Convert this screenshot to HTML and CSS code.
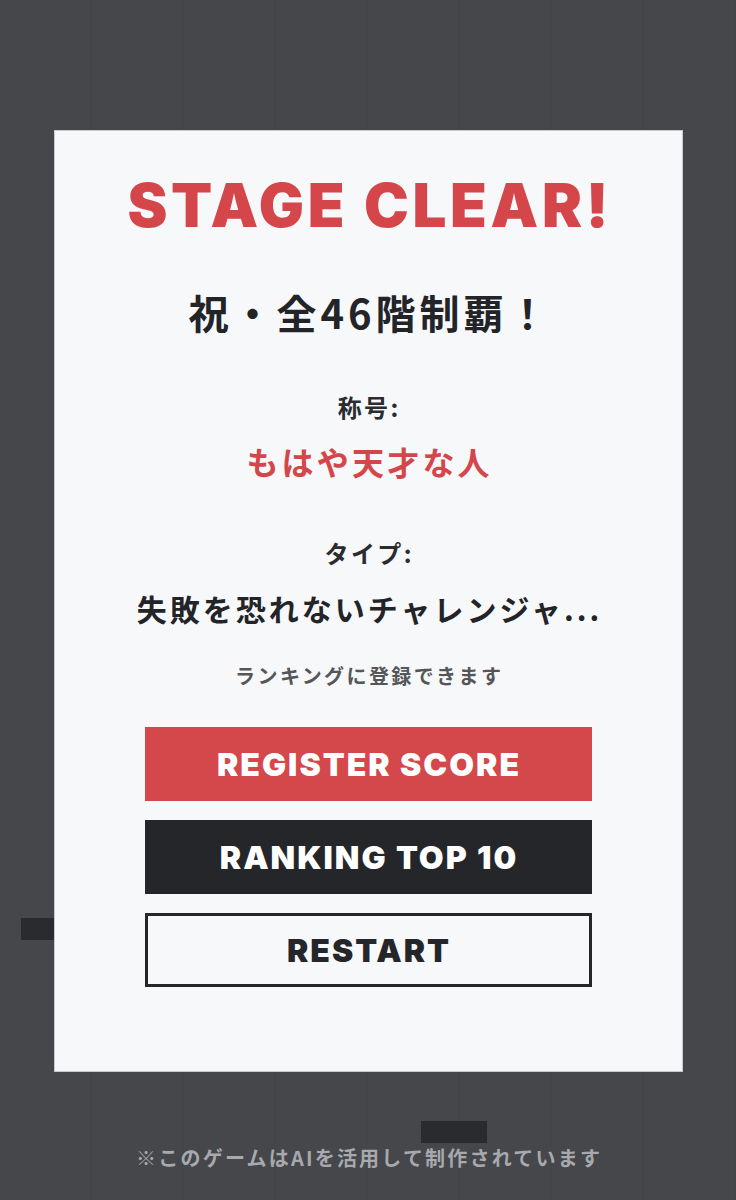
FILE: index.html
```html
<!DOCTYPE html>
<html lang="ja">
<head>
<meta charset="utf-8">
<title>STAGE CLEAR</title>
<link rel="stylesheet" href="styles.css">
</head>
<body>
<div class="game">
  <div class="block block-a"></div>
  <div class="block block-b"></div>
</div>
<div class="overlay">
  <div class="modal">
    <h1 class="title">STAGE CLEAR!</h1>
    <p class="conquer">祝・全46階制覇！</p>
    <p class="label label-first">称号:</p>
    <p class="rank-title">もはや天才な人</p>
    <p class="label label-second">タイプ:</p>
    <p class="type">失敗を恐れないチャレンジャ...</p>
    <p class="note">ランキングに登録できます</p>
    <div class="buttons">
      <button class="btn btn-red">REGISTER SCORE</button>
      <button class="btn btn-dark">RANKING TOP 10</button>
      <button class="btn btn-outline">RESTART</button>
    </div>
  </div>
  <p class="footer">※このゲームはAIを活用して制作されています</p>
</div>
</body>
</html>
```

FILE: styles.css
```css
* { box-sizing: border-box; }
html, body { margin: 0; padding: 0; }
body {
  width: 736px;
  height: 1200px;
  background-color: #45474a;
  background-image: repeating-linear-gradient(90deg, transparent 0, transparent 90px, rgba(0,0,0,0.025) 90px, rgba(0,0,0,0.025) 92px);
  position: relative;
  overflow: hidden;
  font-family: "Noto Sans CJK JP", "Noto Sans", sans-serif;
}
.game { position: absolute; inset: 0; }
.block { position: absolute; background: #2a2b2f; }
.block-a { left: 21px; top: 918px; width: 60px; height: 22px; }
.block-b { left: 421px; top: 1121px; width: 66px; height: 22px; }

.overlay {
  position: relative;
  display: flex;
  flex-direction: column;
  align-items: center;
  padding-top: 130px;
}
.modal {
  width: 629px;
  height: 942px;
  background: #f7f8fa;
  border: 1px solid #c9cacd;
  display: flex;
  flex-direction: column;
  align-items: center;
  padding-top: 38px;
  text-align: center;
}
.modal p, .modal h1 { margin: 0; }
.title {
  font-family: "Inter", "Liberation Sans", sans-serif;
  font-weight: 900;
  font-size: 60px;
  line-height: 72px;
  color: #d5464b;
  letter-spacing: 3.7px;
  padding-left: 3.7px;
}
.conquer {
  margin-top: 46px !important;
  font-size: 40px;
  line-height: 50px;
  font-weight: 700;
  letter-spacing: 0.1em;
  color: #232428;
  padding-left: 0.1em;
}
.label {
  font-size: 24px;
  line-height: 32px;
  font-weight: 700;
  color: #2b2c30;
  letter-spacing: 0.1em;
  padding-left: 0.1em;
}
.label-first { margin-top: 54px !important; }
.label-second { margin-top: 54px !important; }
.rank-title {
  margin-top: 16px !important;
  font-size: 32px;
  line-height: 44px;
  font-weight: 700;
  color: #d5464b;
  letter-spacing: 0.1em;
  padding-left: 0.1em;
}
.type {
  margin-top: 19px !important;
  font-size: 30px;
  line-height: 40px;
  font-weight: 700;
  color: #232428;
  letter-spacing: 0.1em;
  padding-left: 0.1em;
}
.note {
  margin-top: 34px !important;
  font-size: 20px;
  line-height: 28px;
  font-weight: 700;
  color: #55565a;
  letter-spacing: 2.4px;
  padding-left: 2.4px;
}
.buttons {
  margin-top: 37px;
  width: 447px;
  display: flex;
  flex-direction: column;
  gap: 19px;
}
.btn {
  height: 74px;
  border: none;
  font-family: "Inter", "Liberation Sans", sans-serif;
  font-weight: 900;
  font-size: 32px;
  letter-spacing: 2px;
  padding: 0 0 0 2px;
  cursor: pointer;
}
.btn-red { background: #d4474b; color: #ffffff; }
.btn-dark { background: #25262a; color: #ffffff; }
.btn-outline { background: #f7f8fa; color: #25262a; border: 3px solid #25262a; }

.footer {
  margin: 72px 0 0;
  font-size: 20px;
  line-height: 28px;
  font-weight: 700;
  color: #a7a9ae;
  letter-spacing: 2.2px;
  padding-left: 2.2px;
}
```
